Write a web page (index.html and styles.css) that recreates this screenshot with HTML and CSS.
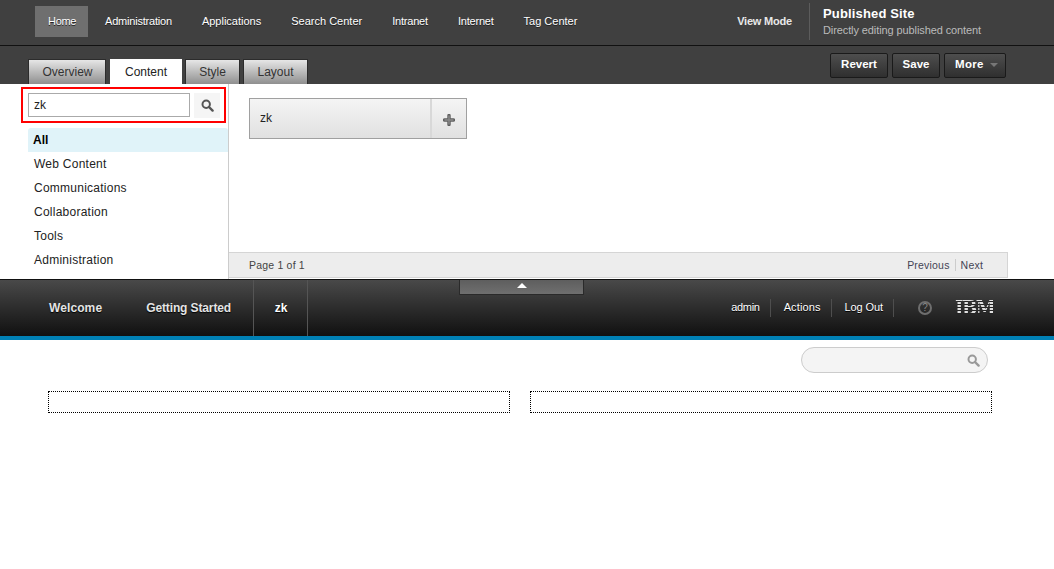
FILE: index.html
```html
<!DOCTYPE html>
<html lang="en">
<head>
<meta charset="utf-8">
<title>Published Site</title>
<link rel="stylesheet" href="styles.css">
</head>
<body>
<header class="topbar">
  <nav class="mainnav">
    <a class="mainnav-item is-active">Home</a>
    <a class="mainnav-item item-tight">Administration</a>
    <a class="mainnav-item">Applications</a>
    <a class="mainnav-item">Search Center</a>
    <a class="mainnav-item item-tight">Intranet</a>
    <a class="mainnav-item item-tight">Internet</a>
    <a class="mainnav-item">Tag Center</a>
  </nav>
  <a class="viewmode">View Mode</a>
  <div class="siteinfo">
    <div class="siteinfo-title">Published Site</div>
    <div class="siteinfo-sub">Directly editing published content</div>
  </div>
</header>
<div class="toolbar">
  <div class="tabs">
    <a class="tab tab-overview">Overview</a>
    <a class="tab tab-content is-active">Content</a>
    <a class="tab tab-style">Style</a>
    <a class="tab tab-layout">Layout</a>
  </div>
  <div class="actions">
    <button class="btn btn-revert">Revert</button>
    <button class="btn btn-save">Save</button>
    <button class="btn btn-more">More<span class="caret"></span></button>
  </div>
</div>
<section class="panel">
  <aside class="sidebar">
    <div class="searchbox">
      <div class="searchbox-input">zk</div>
      <div class="searchbox-btn">
        <svg width="13" height="13" viewBox="0 0 13 13"><circle cx="5.2" cy="5.2" r="3.7" fill="none" stroke="#555" stroke-width="2"/><path d="M8 8l3.6 3.6" stroke="#555" stroke-width="2.4" stroke-linecap="round"/></svg>
      </div>
    </div>
    <ul class="catlist">
      <li class="cat is-active">All</li>
      <li class="cat">Web Content</li>
      <li class="cat">Communications</li>
      <li class="cat">Collaboration</li>
      <li class="cat">Tools</li>
      <li class="cat">Administration</li>
    </ul>
  </aside>
  <div class="results">
    <div class="results-body">
      <div class="tile">
        <div class="tile-label">zk</div>
        <div class="tile-add">
          <svg width="12" height="12" viewBox="0 0 12 12"><path d="M6 1.500v9M1.500 6h9" fill="none" stroke="#5f5f5f" stroke-width="3.400" stroke-linecap="round"/><path d="M6 2v8M2 6h8" fill="none" stroke="#8a8a8a" stroke-width="1.400" stroke-linecap="round"/></svg>
        </div>
      </div>
    </div>
    <div class="pager">
      <span class="pager-count">Page 1 of 1</span>
      <span class="pager-links"><a class="pager-prev">Previous</a><a class="pager-next">Next</a></span>
    </div>
  </div>
</section>
<div class="sitebar">
  <a class="handle"><span class="handle-arrow"></span></a>
  <nav class="pagenav">
    <a class="pagenav-item item-welcome">Welcome</a>
    <a class="pagenav-item item-started">Getting Started</a>
    <a class="pagenav-item item-zk">zk</a>
  </nav>
  <div class="usernav">
    <a class="usernav-item item-admin">admin</a>
    <a class="usernav-item item-actions">Actions</a>
    <a class="usernav-item item-logout">Log Out</a>
    <span class="help">?</span>
    <span class="ibm">IBM</span>
  </div>
</div>
<main class="page">
  <div class="pagesearch">
    <div class="pill">
      <svg width="13" height="13" viewBox="0 0 13 13"><circle cx="5.200" cy="5.200" r="3.700" fill="none" stroke="#999" stroke-width="2"/><path d="M8 8l3.600 3.600" stroke="#999" stroke-width="2.400" stroke-linecap="round"/></svg>
    </div>
  </div>
  <div class="columns">
    <div class="dropzone"></div>
    <div class="dropzone"></div>
  </div>
</main>
</body>
</html>
```
FILE: styles.css
```css
* { box-sizing: border-box; }
html, body { margin: 0; padding: 0; }
body { font-family: "Liberation Sans", Arial, sans-serif; font-size: 12px; color: #222; background: #fff; overflow: hidden; }
ul { list-style: none; margin: 0; padding: 0; }

.topbar { display: flex; height: 46px; background: #404040; border-bottom: 1px solid #111; padding-left: 35px; color: #fff; }
.mainnav { display: flex; gap: 4px; flex: 1; padding-top: 6px; }
.mainnav-item { height: 31px; line-height: 31px; padding: 0 13px; font-size: 11px; color: #fff; text-shadow: 0 1px 0 #222; }
.mainnav-item.is-active { flex: none; width: 53px; padding-right: 0; letter-spacing: -0.3px; background: #6f6f6f; }
.mainnav-item.item-tight { letter-spacing: -0.2px; }
.viewmode { line-height: 42px; font-size: 11px; font-weight: bold; letter-spacing: -0.2px; color: #e8e8e8; margin-right: 17px; }
.siteinfo { width: 245px; margin-top: 3px; height: 37px; padding: 3px 0 0 13px; border-left: 1px solid #5c5c5c; }
.siteinfo-title { font-size: 13px; font-weight: bold; letter-spacing: 0.15px; line-height: 16px; color: #fff; }
.siteinfo-sub { font-size: 11px; letter-spacing: -0.1px; line-height: 16px; color: #bbb; }

.toolbar { display: flex; justify-content: space-between; height: 38px; background: #404040; padding: 13px 48px 0 28px; }
.tabs { display: flex; gap: 3px; align-items: flex-end; }
.tab { height: 25px; line-height: 24px; text-align: center; font-size: 12px; color: #333; border: 1px solid #2c2c2c; border-bottom: 0; background: linear-gradient(#e6e6e6, #8f8f8f); }
.tab.is-active { background: #fff; border-color: #fff; color: #222; }
.tab-overview { width: 78px; margin-right: 1px; padding-left: 1px; }
.tab-content { width: 72px; }
.tab-style { width: 55px; }
.tab-layout { width: 65px; }
.actions { display: flex; gap: 4px; margin-top: -6px; height: 25px; }
.btn { height: 25px; padding: 0 0 3px; border: 1px solid #1a1a1a; border-radius: 2px; background: linear-gradient(#4e4e4e, #2f2f2f); color: #fff; font: bold 11.500px "Liberation Sans", Arial, sans-serif; }
.btn-revert { width: 58px; }
.btn-save { width: 48px; }
.btn-more { width: 62px; text-align: left; padding-left: 10px; letter-spacing: 0.3px; }
.caret { display: inline-block; margin-left: 6px; vertical-align: 1px; border: 4px solid transparent; border-top-color: #777; border-bottom: 0; }

.panel { display: flex; height: 195px; background: #fff; }
.sidebar { width: 229px; padding: 3px 0 0 21px; border-right: 1px solid #ccc; }
.searchbox { display: flex; width: 205px; height: 36px; border: 2px solid #f00; padding: 4px 0 0 5px; margin-bottom: 5px; }
.searchbox-input { width: 162px; height: 24px; line-height: 22px; border: 1px solid #aaa; padding-left: 5px; font-size: 12px; color: #222; }
.searchbox-btn { flex: none; width: 26px; height: 25px; margin-left: 4px; background: #f5f5f5; display: flex; align-items: center; justify-content: center; }
.catlist { margin-left: 7px; }
.cat { height: 24px; line-height: 24px; padding-left: 6px; font-size: 12px; color: #222; letter-spacing: 0.25px; }
.cat.is-active { padding-left: 5px; background: #e0f3f9; border-radius: 3px 3px 0 0; font-weight: bold; color: #000; letter-spacing: 0; }

.results { display: flex; flex-direction: column; width: 779px; }
.results-body { flex: 1; padding: 14px 0 0 20px; }
.tile { display: flex; width: 218px; height: 41px; border: 1px solid #a0a0a0; background: linear-gradient(#f4f4f4, #e1e1e1); }
.tile-label { width: 182px; padding-left: 10px; line-height: 39px; font-size: 12px; border-right: 2px solid #d8d8d8; }
.tile-add { flex: 1; display: flex; align-items: center; justify-content: center; padding-top: 3px; }
.pager { display: flex; justify-content: space-between; height: 26px; margin-bottom: 1px; padding: 0 24px 0 20px; line-height: 24px; background: #ededed; border: 1px solid #d5d5d5; border-left: 0; font-size: 10.500px; color: #444; letter-spacing: 0.2px; }
.pager-prev { padding-right: 5px; border-right: 1px solid #ccc; color: #445; }
.pager-next { padding-left: 5px; color: #445; }

.sitebar { position: relative; display: flex; justify-content: space-between; height: 61px; border-top: 1px solid #111; border-bottom: 4px solid #0080b5; background: linear-gradient(#494949, #101010); padding: 0 61px 0 0; color: #fff; }
.handle { position: absolute; left: 459px; top: 0; width: 125px; height: 15px; background: linear-gradient(#5e5e5e, #6f6f6f); border: 1px solid #2a2a2a; border-top: 0; display: flex; justify-content: center; padding-top: 3px; }
.handle-arrow { width: 0; height: 0; border: 5px solid transparent; border-bottom-color: #fff; border-top: 0; }
.pagenav { display: flex; padding-left: 33px; }
.pagenav-item { line-height: 57px; font-size: 12px; font-weight: bold; color: #e4e4e4; text-shadow: 0 1px 1px #000; padding: 0 17px; }
.item-welcome { padding-left: 16px; letter-spacing: 0.1px; }
.item-started { padding: 0 22px 0 27px; letter-spacing: -0.12px; }
.item-zk { width: 55px; padding: 0 0 0 1px; text-align: center; color: #fff; border-left: 1px solid #555; border-right: 1px solid #555; }
.usernav { display: flex; align-items: center; height: 55px; }
.usernav-item { height: 18px; line-height: 17px; font-size: 11px; color: #fff; padding: 0 10px 0 13px; border-right: 1px solid #4e4e4e; text-shadow: 0 1px 0 #000; }
.item-admin { letter-spacing: -0.3px; }
.item-actions { letter-spacing: 0.12px; }
.item-logout { letter-spacing: -0.1px; }
.help { width: 14px; height: 14px; margin-left: 24px; border: 2px solid #6e6e6e; border-radius: 50%; color: #888; font-size: 10px; line-height: 10px; text-align: center; }
.ibm { width: 38px; margin-left: 23px; font: bold 18px/18px "DejaVu Serif", serif; letter-spacing: -1.500px; color: transparent; background: repeating-linear-gradient(#e0e0e0 0 2px, #222 2px 3px); -webkit-background-clip: text; background-clip: text; }

.page { padding: 7px 62px 0 48px; }
.pagesearch { display: flex; justify-content: flex-end; height: 44px; padding-right: 4px; }
.pill { width: 187px; height: 26px; border: 1px solid #ccc; border-radius: 13px; background: #f4f4f4; display: flex; align-items: center; justify-content: flex-end; padding-right: 7px; }
.columns { display: flex; gap: 20px; }
.dropzone { width: 462px; height: 22px; border: 1px dotted #000; }
```
